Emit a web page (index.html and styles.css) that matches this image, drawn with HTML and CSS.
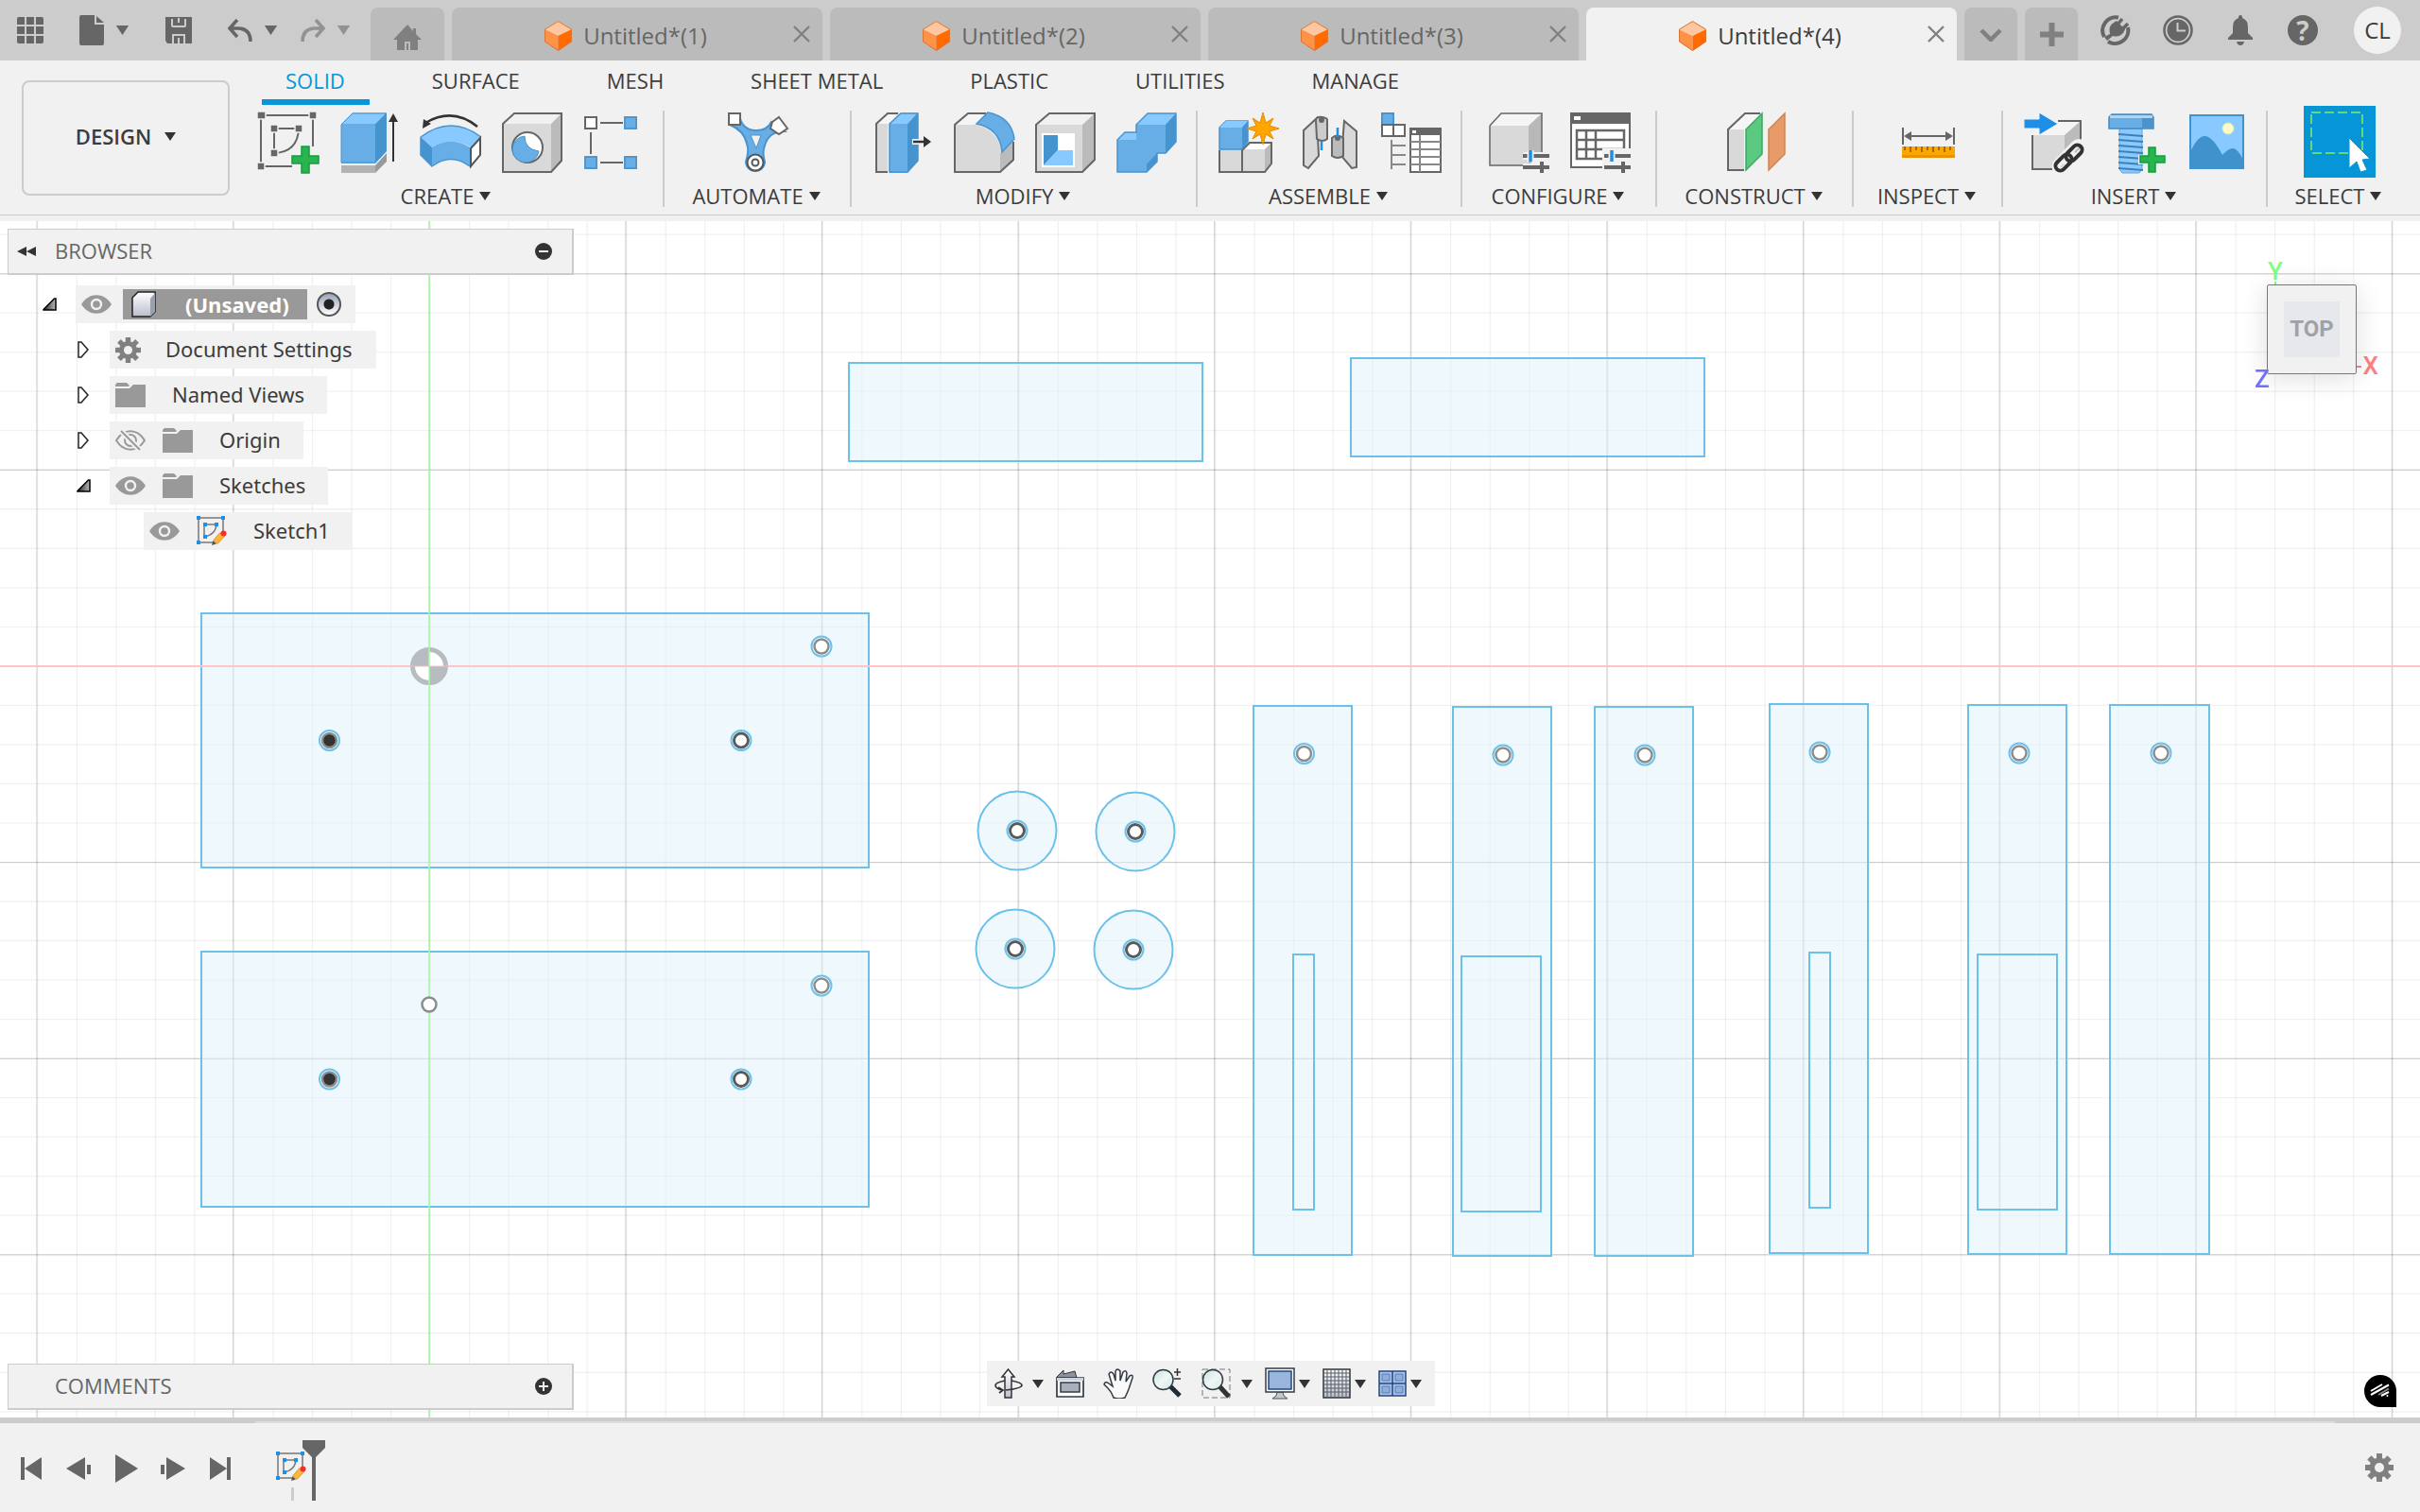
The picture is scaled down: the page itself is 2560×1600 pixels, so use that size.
FILE: index.html
```html
<!DOCTYPE html>
<html lang="en">
<head>
<meta charset="utf-8">
<meta name="viewport" content="width=device-width, initial-scale=1">
<title>Untitled*(4)</title>
<link rel="stylesheet" href="styles.css">
</head>
<body>
<svg class="sprite" aria-hidden="true">
  <symbol id="caret" viewBox="0 0 12 9"><path d="M0 0H12L6 9Z" fill="currentColor"/></symbol>
  <symbol id="cube" viewBox="0 0 29 32"><path d="M0 9L14.500 0L29 9L14.500 16Z" fill="#ffc7a0"/><path d="M0 9L14.500 16V32L0 22Z" fill="#ff9248"/><path d="M29 9L14.500 16V32L29 22Z" fill="#ff6b00"/><path d="M.5 9L14.500 .6L28.500 9V22L14.500 31.400L.5 22Z" fill="none" stroke="#d9762f" stroke-width="1"/></symbol>
  <symbol id="close" viewBox="0 0 20 18"><path d="M2 1L18 17M18 1L2 17" stroke="currentColor" stroke-width="2.400"/></symbol>
  <symbol id="eye" viewBox="0 0 32 20"><path d="M0 10C8-3 24-3 32 10C24 23 8 23 0 10Z" fill="#999"/><circle cx="16" cy="10" r="5" fill="none" stroke="#f1f1f1" stroke-width="2.400"/></symbol>
  <symbol id="eye-off" viewBox="0 0 32 22"><path d="M1 11C9-2 23-2 31 11C23 24 9 24 1 11Z" fill="none" stroke="#999" stroke-width="2"/><circle cx="16" cy="11" r="6" fill="none" stroke="#999" stroke-width="2"/><circle cx="16" cy="11" r="2" fill="#999"/><path d="M5 0L27 22" stroke="#f1f1f1" stroke-width="6"/><path d="M6 1L26 21" stroke="#999" stroke-width="2"/></symbol>
  <symbol id="folder" viewBox="0 0 32 26"><path d="M0 1.500H1L1.500 0H12L15 3L14 4H0Z" fill="#999"/><path d="M0 6H15L19 2H32V26H0Z" fill="#999"/></symbol>
  <symbol id="gear" viewBox="0 0 30 30"><g fill="#808080"><rect x="12" width="6" height="30"/><rect y="12" width="30" height="6"/><rect x="12" width="6" height="30" transform="rotate(45 15 15)"/><rect y="12" width="30" height="6" transform="rotate(45 15 15)"/><circle cx="15" cy="15" r="10.500"/></g><circle cx="15" cy="15" r="5" fill="#f1f1f1"/></symbol>
  <symbol id="closed" viewBox="0 0 12 18"><path d="M1 1H4L11 9L4 17H1Z" fill="#fff" stroke="#222" stroke-width="1.500"/></symbol>
  <symbol id="open" viewBox="0 0 15 14"><path d="M1 12.500L12.500 1H14V13H1Z" fill="url(#openfill)" stroke="#000" stroke-width="1.500"/></symbol>
  <linearGradient id="openfill"><stop stop-color="#222"/><stop offset="1" stop-color="#bbb"/></linearGradient>
  <linearGradient id="steel" x1="0" y1="0" x2="0" y2="1"><stop stop-color="#fff"/><stop offset="1" stop-color="#b9bfcb"/></linearGradient>
  <linearGradient id="lens" x1="0" y1="0" x2="1" y2="1"><stop stop-color="#c9dedd"/><stop offset=".5" stop-color="#eef7f5"/><stop offset="1" stop-color="#d3e6e4"/></linearGradient>
  <symbol id="sketch" viewBox="0 0 32 32"><path d="M2 2H28V20M2 2V28H18M8 9H21Q20 20 8 22Z" fill="none" stroke="#777" stroke-width="1.500"/><g fill="#1e8fe6"><rect width="4" height="4"/><rect x="26" width="4" height="4"/><rect y="26" width="4" height="4"/><rect x="7" y="7" width="4" height="4"/><rect x="19" y="7" width="4" height="4"/><rect x="7" y="20" width="4" height="4"/></g><path d="M16 31L17.500 26L21 29.500Z" fill="#555"/><path d="M18 25.500L25 17.500L29.500 21.500L22 29.500Z" fill="#fbb83c" stroke="#d8932a" stroke-width="1"/><circle cx="28.500" cy="18.500" r="3" fill="#f03030"/></symbol>
  <symbol id="sliders" viewBox="0 0 28 24"><path d="M0 6H28M0 18H28" stroke="#f1f1f1" stroke-width="8"/><path d="M0 6H28M0 18H28" stroke="#666" stroke-width="4"/><path d="M8 0V12" stroke="#f1f1f1" stroke-width="7"/><path d="M8 0V12" stroke="#1e8fe6" stroke-width="3.500"/><path d="M20 12V24" stroke="#666" stroke-width="4"/></symbol>
</svg>

<header class="appbar">
  <div class="quick">
    <button class="icon-btn" aria-label="Data panel"><svg width="28" height="28" viewBox="0 0 28 28" fill="#666"><path d="M2 0H8V8H0V2Q0 0 2 0ZM10 0H18V8H10ZM20 0H26Q28 0 28 2V8H20ZM0 10H8V18H0ZM10 10H18V18H10ZM20 10H28V18H20ZM0 20H8V28H2Q0 28 0 26ZM10 20H18V28H10ZM20 20H28V26Q28 28 26 28H20Z"/></svg></button>
    <button class="icon-btn drop" aria-label="File"><svg width="26" height="32" viewBox="0 0 26 32" fill="#666"><path d="M2 0H16V10H26V30Q26 32 24 32H2Q0 32 0 30V2Q0 0 2 0Z"/><path d="M18 1L26 8H18Z"/></svg><svg class="c15"><use href="#caret"/></svg></button>
    <button class="icon-btn" aria-label="Save"><svg width="28" height="28" viewBox="0 0 28 28"><path d="M0 0H28V28H2L0 25Z" fill="#666"/><path d="M7 2V9Q7 10 8 10H20Q21 10 21 9V2M14 1V6M8 28V19H20V28M14 22V28" fill="none" stroke="#ccc" stroke-width="2"/></svg></button>
    <button class="icon-btn drop" aria-label="Undo"><svg width="26" height="25" viewBox="0 0 26 25"><path d="M10 1L2 10L10 19M2 10H12Q24 11 24 24" fill="none" stroke="#666" stroke-width="3.500"/></svg><svg class="c15"><use href="#caret"/></svg></button>
    <button class="icon-btn drop faint" aria-label="Redo"><svg width="26" height="25" viewBox="0 0 26 25"><path d="M16 1L24 10L16 19M24 10H14Q2 11 2 24" fill="none" stroke="#929292" stroke-width="3.500"/></svg><svg class="c15"><use href="#caret"/></svg></button>
  </div>
  <nav class="tabs" aria-label="Documents">
    <button class="tab home" aria-label="Home"><svg width="30" height="27" viewBox="0 0 30 27"><path d="M15 0L21 7V4H24V10L30 16H26V27H18V18H12V27H4V16H0Z" fill="#808080"/><path d="M14 20H16V27H14Z" fill="#808080"/></svg></button>
    <div class="tab"><a class="title" href="#1"><svg width="29" height="32"><use href="#cube"/></svg>Untitled*(1)</a><button class="x" aria-label="Close"><svg width="20" height="18"><use href="#close"/></svg></button></div>
    <div class="tab"><a class="title" href="#2"><svg width="29" height="32"><use href="#cube"/></svg>Untitled*(2)</a><button class="x" aria-label="Close"><svg width="20" height="18"><use href="#close"/></svg></button></div>
    <div class="tab"><a class="title" href="#3"><svg width="29" height="32"><use href="#cube"/></svg>Untitled*(3)</a><button class="x" aria-label="Close"><svg width="20" height="18"><use href="#close"/></svg></button></div>
    <div class="tab active"><a class="title" href="#4"><svg width="29" height="32"><use href="#cube"/></svg>Untitled*(4)</a><button class="x" aria-label="Close"><svg width="20" height="18"><use href="#close"/></svg></button></div>
    <button class="tab small" aria-label="All tabs"><svg width="24" height="16" viewBox="0 0 24 16"><path d="M2 4L12 14L22 4" fill="none" stroke="#808080" stroke-width="4.500"/></svg></button>
    <button class="tab small" aria-label="New tab"><svg width="25" height="25" viewBox="0 0 25 25"><path d="M12.500 0V25M0 12.500H25" stroke="#808080" stroke-width="6"/></svg></button>
  </nav>
  <div class="account">
    <button class="icon-btn" aria-label="Extensions"><svg width="32" height="32" viewBox="0 0 32 32"><path d="M19 2.500A14 14 0 0 0 4 23M29 13A14 14 0 0 1 8 28" fill="none" stroke="#666" stroke-width="4"/><path d="M10 20Q8 11 14 8L17 6L26 15L24 19Q19 24 13 22L7 27L4 23Z" fill="#666"/><path d="M18 10L23 4M23 15L29 9" stroke="#666" stroke-width="3.500"/></svg></button>
    <button class="icon-btn" aria-label="Jobs"><svg width="32" height="32" viewBox="0 0 32 32"><circle cx="16" cy="16" r="14.500" fill="none" stroke="#666" stroke-width="2.500"/><circle cx="16" cy="16" r="11.500" fill="#666"/><path d="M15.500 8V16.500H24" fill="none" stroke="#ccc" stroke-width="2"/></svg></button>
    <button class="icon-btn" aria-label="Notifications"><svg width="32" height="32" viewBox="0 0 32 32" fill="#666"><path d="M14 2Q14 0 16 0T18 2V3Q24 5 24 13V19L29 24V26H3V24L8 19V13Q8 5 14 3ZM12 28H20Q19 32 16 32T12 28Z"/></svg></button>
    <button class="icon-btn help" aria-label="Help">?</button>
    <button class="avatar">CL</button>
  </div>
</header>

<section class="ribbon">
  <button class="workspace">DESIGN <svg class="c12"><use href="#caret"/></svg></button>
  <div class="ribbon-main">
    <nav class="rtabs" aria-label="Toolbar">
      <button class="on">SOLID</button><button>SURFACE</button><button>MESH</button><button>SHEET METAL</button><button>PLASTIC</button><button>UTILITIES</button><button>MANAGE</button>
    </nav>
    <div class="groups">
      <div class="group create">
        <div class="tools">
          <button aria-label="Create Sketch"><svg viewBox="0 0 64 64"><path d="M3 3H58V36M3 3V57H36M17 17H43Q42 42 17 43Z" fill="none" stroke="#666" stroke-width="2"/><g fill="#666" stroke="#f1f1f1" stroke-width="1.500"><path d="M-1-1H8V7H-1ZM54-1H62V7H54ZM-1 53H7V61H-1ZM13 13H21V21H13ZM39 13H47V21H39ZM13 39H21V47H13Z"/></g><path d="M46 34H54V46H66V54H54V66H46V54H34V46H46Z" fill="#f1f1f1"/><path d="M46 36H54V46H64V54H54V64H46V54H36V46H46Z" fill="#28b44f" stroke="#179a42" stroke-width="1.500"/></svg></button>
          <button aria-label="Extrude"><svg viewBox="0 0 64 64"><path d="M2 12L14 0H50L38 12Z" fill="#88caff"/><path d="M2 12H38V54H2Z" fill="#68aee6"/><path d="M38 12L50 0V41L38 54Z" fill="#4694cf"/><path d="M2 13L14 1H49V41L38 53H2Z" fill="none" stroke="#4a93cc"/><path d="M2 56H38V64H2Z" fill="#b3b3b3"/><path d="M38 56L50 43V52L38 64Z" fill="#999"/><path d="M57 6V52" stroke="#333" stroke-width="2"/><path d="M52 10L57 1L62 10Z" fill="#333"/></svg></button>
          <button aria-label="Revolve"><svg viewBox="0 0 64 64"><path d="M60 15Q34-6 5 11" fill="none" stroke="#333" stroke-width="2.500"/><path d="M2 17L3 7L11 12Z" fill="#333"/><path d="M0 26Q32 2 64 26L53 37Q32 24 12 37Z" fill="#88caff"/><path d="M12 37Q32 24 52 37V57Q32 42 12 57Z" fill="#68aee6"/><path d="M0 26L12 37V57L0 45Z" fill="#4694cf"/><path d="M0 26Q32 2 64 26M0 26V45L12 57Q32 42 52 57" fill="none" stroke="#4a93cc" stroke-width="1.500"/><path d="M53 38L63 27V45L53 57Z" fill="#fff" stroke="#555" stroke-width="2"/></svg></button>
          <button aria-label="Hole"><svg viewBox="0 0 64 64"><path d="M1 12L13 1H63V51L52 63H1Z" fill="#f1f1f1"/><path d="M1 12H52V63H1Z" fill="#d9d9d9"/><path d="M52 12L63 1V51L52 63Z" fill="#bbb"/><path d="M1 12L13 1H63V51L52 63H1Z" fill="none" stroke="#666" stroke-width="2"/><circle cx="27" cy="37" r="16" fill="#fff" stroke="#666" stroke-width="2"/><path d="M24 25A14 14 0 1 0 39 41Q24 39 24 25Z" fill="#68aee6" stroke="#4a93cc"/></svg></button>
          <button aria-label="Rectangular Pattern"><svg viewBox="0 0 64 64"><path d="M18 11H42M8 21V44M18 53H42" stroke="#666" stroke-width="2"/><path d="M2 5H14V17H2Z" fill="#fff" stroke="#666" stroke-width="2"/><path d="M44 5H56V17H44ZM2 47H14V59H2ZM44 47H56V59H44Z" fill="#68aee6" stroke="#5296cc" stroke-width="2"/></svg></button>
        </div>
        <button class="label">CREATE <svg class="c12"><use href="#caret"/></svg></button>
      </div>
      <div class="group automate">
        <div class="tools">
          <button aria-label="Automated Modeling"><svg viewBox="0 0 64 64"><path d="M2 13L12 3Q15 18 28 19Q41 20 46 10L60 20Q43 20 39 35Q36 42 39 52A10 10 0 1 1 19 52Q23 40 20 33Q17 19 2 13Z" fill="#68aee6" stroke="#4a93cc" stroke-width="2"/><path d="M24 24H35L30 38Z" fill="#f1f1f1" stroke="#4a93cc"/><path d="M1 1H13V13H1Z" fill="#fff" stroke="#666" stroke-width="2"/><path d="M54 5L63 17L54 23L45 17L47 10Z" fill="#fff" stroke="#666" stroke-width="2"/><circle cx="29" cy="53" r="8.500" fill="#fff" stroke="#555" stroke-width="2"/><circle cx="29" cy="53" r="3.500" fill="#fff" stroke="#555" stroke-width="2"/></svg></button>
        </div>
        <button class="label">AUTOMATE <svg class="c12"><use href="#caret"/></svg></button>
      </div>
      <div class="group modify">
        <div class="tools">
          <button aria-label="Press Pull"><svg viewBox="0 0 64 64"><path d="M4 12L16 1H28L16 12V63H4Z" fill="#d9d9d9"/><path d="M4 12L16 1H27L17 12Z" fill="#f5f5f5"/><path d="M27 1H16L4 12V63H16" fill="none" stroke="#666" stroke-width="2"/><path d="M18 12L30 0H48L37 12Z" fill="#88caff"/><path d="M18 12H37V64H18Z" fill="#68aee6"/><path d="M37 12L48 0V51L37 64Z" fill="#4694cf"/><path d="M18 12L30 1H48V51L37 63H18Z" fill="none" stroke="#4a93cc" stroke-width="1.500"/><path d="M42 31H54" stroke="#f1f1f1" stroke-width="6"/><path d="M43 31H55" stroke="#333" stroke-width="2.500"/><path d="M54 25L62 31L54 37Z" fill="#333"/></svg></button>
          <button aria-label="Fillet"><svg viewBox="0 0 64 64"><path d="M1 13L15 1H34L24 13Q48 20 50 42L63 32V52L49 63H1Z" fill="#d9d9d9"/><path d="M1 13L15 1H34L24 13Z" fill="#f5f5f5"/><path d="M49 44L63 30V51L49 63Z" fill="#bbb"/><path d="M34 1H15L1 13V63H49L63 50V31" fill="none" stroke="#666" stroke-width="2"/><path d="M24 12L36 0Q61 5 64 28L51 42Q49 17 24 12Z" fill="#68aee6" stroke="#4a93cc" stroke-width="1.500"/></svg></button>
          <button aria-label="Shell"><svg viewBox="0 0 64 64"><path d="M1 13L15 1H63V50L50 63H1Z" fill="#f1f1f1"/><path d="M1 13H50V63H1Z" fill="#d9d9d9"/><path d="M50 13L63 1V50L50 63Z" fill="#bbb"/><path d="M1 13L15 1H63V50L50 63H1Z" fill="none" stroke="#666" stroke-width="2"/><path d="M7 22H42V58H7Z" fill="#fff"/><path d="M9 24H24V40L9 56Z" fill="#4694cf"/><path d="M24 40H40V56H9Z" fill="#88caff"/></svg></button>
          <button aria-label="Combine"><svg viewBox="0 0 64 64"><path d="M1 29L9 21H21V13L33 1H63V31L52 43H43V52L32 63H1Z" fill="#68aee6"/><path d="M1 29L9 21H21V29ZM21 13L33 1H63L52 13Z" fill="#88caff"/><path d="M52 13L63 1V31L52 43ZM32 63V55L43 43V52Z" fill="#4694cf"/><path d="M1 29L9 21H21V13L33 1H63V31L52 43H43V52L32 63H1Z" fill="none" stroke="#4a93cc" stroke-width="1.500"/></svg></button>
        </div>
        <button class="label">MODIFY <svg class="c12"><use href="#caret"/></svg></button>
      </div>
      <div class="group assemble">
        <div class="tools">
          <button aria-label="New Component"><svg viewBox="0 0 64 64"><path d="M1 39H26L32 32H56V53L49 63H1Z" fill="#d9d9d9"/><path d="M26 39L33 32H56L49 39Z" fill="#fff"/><path d="M49 39L56 32V54L49 63Z" fill="#bbb"/><path d="M1 40V63H49L56 54V32H33L25 40V62" fill="none" stroke="#666" stroke-width="2"/><path d="M1 16L8 9H31V31L24 39H1Z" fill="#68aee6" stroke="#4a93cc" stroke-width="1.500"/><path d="M1 16L8 9H31L25 16Z" fill="#88caff"/><path d="M25 16L31 9V31L25 39Z" fill="#4694cf"/><path d="M47 0L50 11L58 6L54 14L64 17L54 20L58 28L50 23L47 34L44 23L36 28L40 20L30 17L40 14L36 6L44 11Z" fill="#ffa500" stroke="#e08d00"/></svg></button>
          <button aria-label="Joint"><svg viewBox="0 0 64 64"><path d="M4 19L18 6L20 46L9 59L4 56Z" fill="#d9d9d9" stroke="#666" stroke-width="2"/><path d="M47 9L60 20V58L55 59L44 46Z" fill="#d9d9d9" stroke="#666" stroke-width="2"/><path d="M17 8Q18 4 24 5T29 9V28Q24 32 18 28Z" fill="#ccc" stroke="#666" stroke-width="2"/><circle cx="23" cy="8" r="3" fill="#666"/><path d="M34 27Q39 22 46 27V46Q40 50 34 46Z" fill="#bbb" stroke="#666" stroke-width="2"/><circle cx="40" cy="27" r="3" fill="#666"/><path d="M23 30V40M40 16V26" stroke="#1e8fe6" stroke-width="2.500"/></svg></button>
          <button aria-label="Bill of Materials"><svg viewBox="0 0 64 64"><path d="M1 1H13V13H1Z" fill="#68aee6" stroke="#4a93cc" stroke-width="2"/><path d="M1 13H13V25H1ZM13 13H25V25H13Z" fill="#fff" stroke="#666" stroke-width="2"/><path d="M11 29V60M11 35H26M11 45H26M11 55H26" stroke="#888" stroke-width="2"/><path d="M31 17H63V63H31Z" fill="#fff" stroke="#666" stroke-width="2"/><path d="M30 16H64V24H30Z" fill="#666"/><path d="M31 31H63M31 39H63M31 47H63M31 55H63M41 24V63" stroke="#888" stroke-width="2"/><path d="M33 19H37V22H33Z" fill="#fff"/></svg></button>
        </div>
        <button class="label">ASSEMBLE <svg class="c12"><use href="#caret"/></svg></button>
      </div>
      <div class="group configure">
        <div class="tools">
          <button aria-label="Configure"><svg viewBox="0 0 64 64"><path d="M1 13L13 1H56V43L44 56H1Z" fill="#f5f5f5"/><path d="M1 14H42V56H1Z" fill="#d9d9d9"/><path d="M42 14L56 1V42L42 56Z" fill="#b8b8b8"/><path d="M1 14L13 1H56V43M1 14V56H40" fill="none" stroke="#666" stroke-width="1.500"/><use href="#sliders" x="36" y="40" width="28" height="24"/></svg></button>
          <button aria-label="Configuration Table"><svg viewBox="0 0 64 64"><path d="M1 1H63V58H1Z" fill="#fff" stroke="#666" stroke-width="2"/><path d="M0 0H64V12H0Z" fill="#666"/><path d="M4 4H11V8H4Z" fill="#fff"/><path d="M7 19H57V49H7ZM7 29H57M7 39H57M17 19V49M27 19V49" fill="none" stroke="#666" stroke-width="2.500"/><path d="M34 38H66V66H34Z" fill="#f1f1f1"/><use href="#sliders" x="36" y="40" width="28" height="24"/></svg></button>
        </div>
        <button class="label">CONFIGURE <svg class="c12"><use href="#caret"/></svg></button>
      </div>
      <div class="group construct">
        <div class="tools">
          <button aria-label="Offset Plane"><svg viewBox="0 0 64 64"><path d="M3 18L21 1H37V46L20 61H3Z" fill="#f5f5f5"/><path d="M3 18H20V61H3Z" fill="#d9d9d9"/><path d="M37 1H21L3 18V61H20" fill="none" stroke="#666" stroke-width="2"/><path d="M22 18L39 1V44L22 61Z" fill="#5bc980" stroke="#3da763" stroke-width="1.500"/><path d="M46 18L63 1V44L46 61Z" fill="#e79b68" stroke="#cf8450" stroke-width="1.500"/></svg></button>
        </div>
        <button class="label">CONSTRUCT <svg class="c12"><use href="#caret"/></svg></button>
      </div>
      <div class="group inspect">
        <div class="tools">
          <button aria-label="Measure"><svg viewBox="0 0 64 64"><path d="M5 16V34M59 16V34M8 25H56" stroke="#666" stroke-width="2"/><path d="M6 25L14 20V30ZM58 25L50 20V30Z" fill="#666"/><path d="M4 36H60V48H4Z" fill="#ffa500"/><path d="M4 45H60V48H4Z" fill="#e69500"/><path d="M7 36V40M13 36V42M19 36V40M25 36V42M31 36V40M37 36V42M43 36V40M49 36V42M55 36V40" stroke="#8a5a00" stroke-width="1.500"/></svg></button>
        </div>
        <button class="label">INSPECT <svg class="c12"><use href="#caret"/></svg></button>
      </div>
      <div class="group insert">
        <div class="tools">
          <button aria-label="Insert Derive"><svg viewBox="0 0 64 64"><path d="M9 24L25 9H60V44L43 60H9Z" fill="#f5f5f5"/><path d="M9 24H43V60H9Z" fill="#d9d9d9"/><path d="M43 24L60 9V44L43 60Z" fill="#bbb"/><path d="M36 9H60V38M9 24V60H32" fill="none" stroke="#666" stroke-width="2"/><path d="M0 7H16V0L36 12L16 24V17H0Z" fill="#1e8fe6" stroke="#f1f1f1"/><g fill="none" stroke="#f1f1f1" stroke-width="9"><rect x="42" y="37" width="24" height="11" rx="5.500" transform="rotate(-45 54 43)"/><rect x="32" y="48" width="22" height="11" rx="5.500" transform="rotate(-45 43 53)"/></g><g fill="none" stroke="#333" stroke-width="4"><rect x="43" y="38" width="20" height="10" rx="5" transform="rotate(-45 53 43)"/><rect x="32" y="48" width="20" height="10" rx="5" transform="rotate(-45 42 53)"/></g></svg></button>
          <button aria-label="Insert Fastener"><svg viewBox="0 0 64 64"><path d="M15 17H39V60L36 64H18L15 60Z" fill="#88caff" stroke="#5ea4dc"/><path d="M4 5L7 2H49L51 5V17H4Z" fill="#68aee6" stroke="#4a88bb" stroke-width="1.500"/><path d="M39 4H51V17H39Z" fill="#4a93cc"/><path d="M5 3H50V6H5Z" fill="#a9d6f7"/><path d="M14 23L40 25M14 29L40 31M14 35L40 37M14 41L40 43M14 47L40 49M14 53L40 55M14 59L40 61" stroke="#3f7fb3" stroke-width="2"/><path d="M45 35H55V45H65V55H55V65H45V55H35V45H45Z" fill="#f1f1f1"/><path d="M46 37H53V46H63V53H53V63H46V53H37V46H46Z" fill="#28b44f" stroke="#179a42" stroke-width="1.500"/></svg></button>
          <button aria-label="Insert Canvas"><svg viewBox="0 0 64 64"><path d="M4 3H60V59H4Z" fill="#88caff"/><path d="M4 42Q12 24 20 25T38 45Q44 38 49 38T60 50V59H4Z" fill="#3f92cc"/><path d="M4 3H60V59H4Z" fill="none" stroke="#3f92cc" stroke-width="2"/><circle cx="44" cy="17" r="6" fill="#fffbc8" stroke="#d8e6b0"/></svg></button>
        </div>
        <button class="label">INSERT <svg class="c12"><use href="#caret"/></svg></button>
      </div>
      <div class="group select">
        <div class="tools">
          <button class="picked" aria-label="Select"><svg viewBox="0 0 76 76"><path d="M8 7H62V50H8Z" fill="none" stroke="#66d878" stroke-width="2" stroke-dasharray="10 4"/><path d="M48 34L70 56L62 57L67 68L60 70L56 59L48 66Z" fill="#fff" stroke="#0696d7"/></svg></button>
        </div>
        <button class="label">SELECT <svg class="c12"><use href="#caret"/></svg></button>
      </div>
    </div>
  </div>
</section>

<main class="canvas">
  <svg class="scene" aria-label="Sketch1">
    <g transform="translate(0 -234)" fill="none">
      <g stroke="#000" stroke-opacity=".055" stroke-width="3000">
        <path d="M-3 1500H4000" stroke-dasharray="1.300 40.224" stroke-dashoffset="-.65"/>
        <path d="M1500 205.900V2000" stroke-dasharray="1.300 40.224"/>
      </g>
      <g stroke="#000" stroke-opacity=".15" stroke-width="3000">
        <path d="M38.300 1500H4000" stroke-dasharray="1.300 206.320"/>
        <path d="M1500 289.200V2000" stroke-dasharray="1.300 206.320"/>
      </g>
      <g stroke="#6cc1e9" stroke-width="2" fill="#dff1fc" fill-opacity=".5">
        <rect x="213" y="649" width="706" height="269"/>
        <rect x="213" y="1007" width="706" height="270"/>
        <rect x="898" y="384" width="374" height="104"/>
        <rect x="1429" y="379" width="374" height="104"/>
        <rect x="1326" y="747" width="104" height="581"/>
        <rect x="1537" y="748" width="104" height="581"/>
        <rect x="1687" y="748" width="104" height="581"/>
        <rect x="1872" y="745" width="104" height="581"/>
        <rect x="2082" y="746" width="104" height="581"/>
        <rect x="2232" y="746" width="105" height="581"/>
        <circle cx="1076" cy="879" r="41.500"/><circle cx="1201" cy="880" r="41.500"/><circle cx="1074" cy="1004" r="41.500"/><circle cx="1199" cy="1005" r="41.500"/>
      </g>
      <g stroke="#6cc1e9" stroke-width="2">
        <rect x="1368" y="1010" width="22" height="270"/>
        <rect x="1546" y="1012" width="84" height="270"/>
        <rect x="1914" y="1008" width="22" height="270"/>
        <rect x="2092" y="1010" width="84" height="270"/>
      </g>
      <path d="M0 705H4000" stroke="#ffc4c8" stroke-width="2"/>
      <path d="M454 200V2000" stroke="#a4fba4" stroke-width="1.500"/>
      <g><circle cx="454" cy="705" r="17.500" stroke="#b6bcbf" stroke-width="5" fill="#fff"/><path d="M454 705V687A18 18 0 0 0 436 705ZM454 705V723A18 18 0 0 0 472 705Z" fill="#b6bcbf"/><path d="M454 685V725" stroke="#a4fba4" stroke-width="1.500"/><path d="M434 705H474" stroke="#ecc4c6" stroke-width="1"/></g>
      <g stroke="#6cc1e9" stroke-width="2" fill="#fff">
        <circle cx="869" cy="684" r="10.500"/><circle cx="348.500" cy="783.500" r="10.500"/><circle cx="784" cy="783.500" r="10.500"/>
        <circle cx="869" cy="1043" r="10.500"/><circle cx="348.500" cy="1142" r="10.500"/><circle cx="784" cy="1142" r="10.500"/>
        <circle cx="1076" cy="879" r="10.500"/><circle cx="1201" cy="880" r="10.500"/><circle cx="1074" cy="1004" r="10.500"/><circle cx="1199" cy="1005" r="10.500"/>
        <circle cx="1379.500" cy="797.500" r="10.500"/><circle cx="1590" cy="799" r="10.500"/><circle cx="1740" cy="799" r="10.500"/><circle cx="1925" cy="796" r="10.500"/><circle cx="2136" cy="797" r="10.500"/><circle cx="2286" cy="797" r="10.500"/>
      </g>
      <g stroke="#8c8c8c" stroke-width="2.500">
        <circle cx="869" cy="684" r="7.500"/><circle cx="869" cy="1043" r="7.500"/><circle cx="454" cy="1063" r="7.500" fill="#fff"/>
        <circle cx="1379.500" cy="797.500" r="7.500"/><circle cx="1590" cy="799" r="7.500"/><circle cx="1740" cy="799" r="7.500"/><circle cx="1925" cy="796" r="7.500"/><circle cx="2136" cy="797" r="7.500"/><circle cx="2286" cy="797" r="7.500"/>
      </g>
      <g stroke="#5a5a5a" stroke-width="3">
        <circle cx="784" cy="783.500" r="7.500"/><circle cx="784" cy="1142" r="7.500"/>
        <circle cx="1076" cy="879" r="7.500"/><circle cx="1201" cy="880" r="7.500"/><circle cx="1074" cy="1004" r="7.500"/><circle cx="1199" cy="1005" r="7.500"/>
      </g>
      <g stroke="#8c8c8c" stroke-width="2.500" fill="#333"><circle cx="348.500" cy="783.500" r="7.500"/><circle cx="348.500" cy="1142" r="7.500"/></g>
    </g>
  </svg>

  <aside class="browser">
    <h2 class="panel"><button class="icon-btn fold" aria-label="Collapse browser"><svg width="20" height="10" viewBox="0 0 20 10"><path d="M0 5L10 0V10ZM10 5L20 0V10Z" fill="#333"/></svg></button><span>BROWSER</span><button class="icon-btn" aria-label="Hide"><svg width="18" height="18" viewBox="0 0 18 18"><circle cx="9" cy="9" r="9" fill="#333"/><path d="M4 9H14" stroke="#f1f1f1" stroke-width="2"/></svg></button></h2>
    <ul class="tree">
      <li><button class="icon-btn twist" aria-label="Collapse"><svg width="15" height="14"><use href="#open"/></svg></button><div class="node root"><svg width="32" height="20"><use href="#eye"/></svg><span class="chip"><svg width="26" height="28" viewBox="0 0 26 28"><path d="M1 7L7 1H25V22L20 27H1Z" fill="url(#steel)" stroke="#222" stroke-width="1.500"/><path d="M20 8L25 2V22L20 27Z" fill="#9aa1ae"/></svg>(Unsaved)</span><input type="radio" checked aria-label="Activate component"></div></li>
      <li class="d1"><button class="icon-btn twist" aria-label="Expand"><svg width="12" height="18"><use href="#closed"/></svg></button><div class="node"><svg width="27" height="27"><use href="#gear" width="27" height="27"/></svg><span class="wide">Document Settings</span></div></li>
      <li class="d1"><button class="icon-btn twist" aria-label="Expand"><svg width="12" height="18"><use href="#closed"/></svg></button><div class="node"><svg width="32" height="26"><use href="#folder"/></svg><span>Named Views</span></div></li>
      <li class="d1"><button class="icon-btn twist" aria-label="Expand"><svg width="12" height="18"><use href="#closed"/></svg></button><div class="node"><svg width="32" height="22"><use href="#eye-off"/></svg><svg width="32" height="26"><use href="#folder"/></svg><span>Origin</span></div></li>
      <li class="d1"><button class="icon-btn twist" aria-label="Collapse"><svg width="15" height="14"><use href="#open"/></svg></button><div class="node"><svg width="32" height="20"><use href="#eye"/></svg><svg width="32" height="26"><use href="#folder"/></svg><span>Sketches</span></div></li>
      <li class="d2"><div class="node"><svg width="32" height="20"><use href="#eye"/></svg><svg width="32" height="32"><use href="#sketch"/></svg><span>Sketch1</span></div></li>
    </ul>
  </aside>

  <div class="viewcube"><b class="ax y">Y</b><b class="ax x-axis">X</b><button class="face"><span>TOP</span></button><b class="ax z">Z</b></div>

  <section class="comments"><h2 class="panel"><span>COMMENTS</span><button class="icon-btn" aria-label="Add comment"><svg width="18" height="18" viewBox="0 0 18 18"><circle cx="9" cy="9" r="9" fill="#333"/><path d="M4 9H14M9 4V14" stroke="#f1f1f1" stroke-width="2"/></svg></button></h2></section>

  <div class="navbar">
    <button class="icon-btn pair" aria-label="Orbit"><svg width="30" height="32" viewBox="0 0 30 32"><path d="M11 31V9H8L14.500 1L21 9H18V31Z" fill="url(#steel)" stroke="#333" stroke-width="1.500"/><path d="M11 13Q1 15 1 18T8 23M4 20L9 23L5 26M18 13Q29 15 29 18T12 23" fill="none" stroke="#333" stroke-width="1.700"/></svg><svg class="c12"><use href="#caret"/></svg></button>
    <button class="icon-btn" aria-label="Look At"><svg width="30" height="30" viewBox="0 0 30 30"><path d="M1 8L8 1V5L20 2L22 9H1Z" fill="#8b929c" stroke="#333"/><path d="M1 9H29V29H1Z" fill="#fff" stroke="#333b45" stroke-width="1.700"/><path d="M1 9H29V12H1Z" fill="#ccd3dc"/><path d="M5 14H25V24H5Z" fill="#a9b0bb" stroke="#333b45" stroke-width="1.500"/></svg></button>
    <button class="icon-btn" aria-label="Pan"><svg width="32" height="32" viewBox="0 0 32 32"><path d="M11 31Q9 25 5 21L1 17Q2 13 6 16L10 19L6 6Q8 2 11 6L13 13V3Q15-1 18 3V13L21 4Q24 1 25 5L24 14L28 8Q32 6 31 10L27 22Q25 27 23 31Q17 33 11 31Z" fill="#fafafa" stroke="#333b45" stroke-width="1.500"/></svg></button>
    <button class="icon-btn" aria-label="Zoom"><svg width="32" height="32" viewBox="0 0 32 32"><path d="M19 19L29 29" stroke="#222b38" stroke-width="5"/><circle cx="11.500" cy="12" r="10.500" fill="url(#lens)" stroke="#333b45" stroke-width="1.500"/><path d="M23 4H30M26.500 0V8M23 11H30" stroke="#333" stroke-width="1.500"/></svg></button>
    <button class="icon-btn pair" aria-label="Fit"><svg width="32" height="32" viewBox="0 0 32 32"><path d="M1 1H30V31H1Z" fill="none" stroke="#777" stroke-dasharray="6 3"/><path d="M19 19L29 30" stroke="#333" stroke-width="5"/><circle cx="12" cy="12" r="10.500" fill="url(#lens)" stroke="#333b45" stroke-width="1.500"/></svg><svg class="c12"><use href="#caret"/></svg></button>
    <button class="icon-btn pair tight" aria-label="Display Settings"><svg width="32" height="34" viewBox="0 0 32 34"><path d="M13 26H19L20 30L24 33H8L12 30Z" fill="#c3c8d0" stroke="#555"/><path d="M1 1H31V26H1Z" fill="#fff" stroke="#333b45" stroke-width="1.500"/><path d="M4 4H28V23H4Z" fill="#98b5dd" stroke="#27457c" stroke-width="1.500"/></svg><svg class="c12"><use href="#caret"/></svg></button>
    <button class="icon-btn pair tight" aria-label="Grid and Snaps"><svg width="30" height="32" viewBox="0 0 30 32"><path d="M1 1H29V31H1Z" fill="url(#steel)" stroke="#333" stroke-width="1.500"/><path d="M5 1V31M9 1V31M13 1V31M17 1V31M21 1V31M25 1V31M1 5H29M1 9H29M1 13H29M1 17H29M1 21H29M1 25H29" stroke="#555b66"/></svg><svg class="c12"><use href="#caret"/></svg></button>
    <button class="icon-btn pair tight" aria-label="Viewports"><svg width="30" height="28" viewBox="0 0 30 28"><path d="M1 1H29V27H1Z" fill="#a9c4e8" stroke="#27457c" stroke-width="1.500"/><path d="M15 1V27M1 14H29" stroke="#27457c" stroke-width="1.500"/><path d="M4 4H12V11H4ZM18 4H26V11H18ZM4 17H12V24H4ZM18 17H26V24H18Z" fill="#8eafdc" stroke="#5b7fb8"/></svg><svg class="c12"><use href="#caret"/></svg></button>
  </div>
  <button class="icon-btn assist" aria-label="Assistant"><svg width="34" height="34" viewBox="0 0 34 34"><path d="M17 0A17 17 0 1 0 17 34H34V17A17 17 0 0 0 17 0Z" fill="#000"/><path d="M7 17L19 10M7 21L26 10.500M18 22L26 18" stroke="#fff" stroke-width="2"/><path d="M15 21L26 14.500" stroke="#888" stroke-width="2"/><circle cx="24.500" cy="22" r="1" fill="#fff"/></svg></button>
</main>

<footer class="timeline">
  <div class="play">
    <button class="icon-btn" aria-label="Start"><svg width="30" height="30" viewBox="0 0 30 30" fill="#666"><path d="M4 3H8V27H4ZM8 15L26 3V27Z"/></svg></button>
    <button class="icon-btn" aria-label="Step back"><svg width="30" height="30" viewBox="0 0 30 30" fill="#666"><path d="M2 15L22 3V27ZM24 11H28V21H24Z"/></svg></button>
    <button class="icon-btn" aria-label="Play"><svg width="30" height="30" viewBox="0 0 30 30" fill="#666"><path d="M4 0L28 15L4 30Z"/></svg></button>
    <button class="icon-btn" aria-label="Step forward"><svg width="30" height="30" viewBox="0 0 30 30" fill="#666"><path d="M28 15L8 3V27ZM2 11H6V21H2Z"/></svg></button>
    <button class="icon-btn" aria-label="End"><svg width="30" height="30" viewBox="0 0 30 30" fill="#666"><path d="M26 3H22V27H26ZM22 15L4 3V27Z"/></svg></button>
  </div>
  <button class="icon-btn feature" aria-label="Sketch1"><svg width="32" height="52" viewBox="0 0 32 52"><use href="#sketch" width="32" height="32"/><path d="M16 38H19V52H16Z" fill="#ccc"/></svg></button>
  <svg class="marker" width="24" height="64" viewBox="0 0 24 64"><path d="M0 0H24V8L14 18V64H10V18L0 8Z" fill="#666"/></svg>
  <button class="icon-btn settings" aria-label="Timeline settings"><svg width="30" height="30"><use href="#gear"/></svg></button>
</footer>
</body>
</html>
```
FILE: styles.css
```css
* { box-sizing: border-box; }

body {
  margin: 0;
  min-height: 100vh;
  display: flex;
  flex-direction: column;
  background: #f1f1f1;
  color: #3c3c3c;
  font: 22px/30px "Open Sans", "Noto Sans", sans-serif;
  overflow: hidden;
}

button {
  font: inherit;
  color: inherit;
  background: none;
  border: 0;
  padding: 0;
}

svg { display: block; flex: none; }
.sprite { position: absolute; width: 0; height: 0; }
.icon-btn { display: flex; align-items: center; justify-content: center; }
.c12 { width: 12px; height: 9px; color: #333; }
.c15 { width: 15px; height: 10px; color: #666; }
.faint .c15 { color: #929292; }

/* application bar */
.appbar { display: flex; height: 64px; background: #ccc; }
.quick {
  display: flex;
  align-items: center;
  gap: 38px;
  width: 392px;
  padding-left: 18px;
}
.quick .drop { gap: 12px; }
.quick .faint { margin-left: -14px; }
.tabs { display: flex; align-items: flex-end; gap: 8px; flex: 1; }
.tab {
  display: flex;
  align-items: center;
  flex: 0 1 392px;
  height: 56px;
  padding: 0 12px 0 8px;
  border-radius: 8px 8px 0 0;
  background: #bbb;
  color: #666;
  font-size: 24px;
}
.tab.home { flex: 0 0 78px; padding: 6px 0 0; justify-content: center; }
.tab.small { flex: 0 0 56px; padding: 0; justify-content: center; }
.tab.active { background: #f1f1f1; color: #3c3c3c; }
.title {
  flex: 1;
  display: flex;
  align-items: center;
  justify-content: center;
  gap: 12px;
  padding-top: 4px;
  color: inherit;
  text-decoration: none;
}
.x { color: #808080; }
.account { display: flex; align-items: center; gap: 34px; padding-right: 20px; }
.help {
  width: 32px;
  height: 32px;
  border-radius: 50%;
  background: #666;
  color: #ccc;
  font-size: 28px;
  font-weight: 700;
}
.avatar {
  width: 50px;
  height: 50px;
  margin-left: 4px;
  border-radius: 50%;
  background: #f1f1f1;
  font-size: 24px;
}

/* ribbon */
.ribbon {
  display: flex;
  height: 164px;
  margin-bottom: 6px;
  border-bottom: 1px solid #ccc;
}
.workspace {
  display: flex;
  align-items: center;
  justify-content: center;
  gap: 14px;
  width: 220px;
  height: 122px;
  margin: 21px 7px 0 23px;
  padding-bottom: 4px;
  border: 2px solid #ccc;
  border-radius: 8px;
  font-weight: 600;
}
.ribbon-main { flex: 1; min-width: 0; }
.rtabs { display: flex; gap: 41px; padding-left: 27px; height: 53px; }
.rtabs button {
  height: 47px;
  padding: 0 26px 0 25px;
  border-bottom: 6px solid transparent;
}
.rtabs .on { color: #0696d7; border-color: #0696d7; }
.groups { display: flex; height: 102px; }
.group {
  display: flex;
  flex-direction: column;
  align-items: center;
  border-right: 2px solid #ccc;
}
.tools { display: flex; align-items: center; gap: 22px; height: 66px; padding: 2px 0 0 2px; }
.tools button { width: 64px; height: 64px; }
.tools .picked { width: 76px; height: 76px; background: #0696d7; }
.select .tools { padding: 0; }
.tools svg { width: 100%; height: 100%; overflow: visible; }
.label {
  display: flex;
  align-items: center;
  flex: none;
  gap: 6px;
  height: 48px;
  padding-right: 2px;
}
.create { width: 453px; }
.create .label { padding-right: 8px; }
.automate { width: 198px; }
.modify { width: 366px; }
.assemble { width: 280px; }
.configure { width: 206px; }
.construct { width: 208px; }
.inspect { width: 158px; }
.insert { width: 280px; }
.select { flex: 1; padding-right: 10px; border: 0; }

/* drawing canvas */
.canvas { position: relative; flex: 1; background: #fff; overflow: hidden; }
.scene { position: absolute; inset: 0; width: 100%; height: 100%; }
.browser { position: absolute; left: 8px; top: 8px; width: 599px; }
.comments { position: absolute; left: 8px; bottom: 8px; width: 599px; }
.panel {
  display: flex;
  align-items: center;
  height: 49px;
  margin: 0;
  padding: 0 21px 0 9px;
  background: #f1f1f1;
  border: 1px solid #ccc;
  border-width: 1px 2px 2px 1px;
  color: #666;
  font: inherit;
}
.panel span { flex: 1; padding: 0 0 2px 20px; }
.comments .panel span { padding-left: 40px; }

.tree {
  list-style: none;
  margin: 11px 0 0;
  padding: 0;
  display: flex;
  flex-direction: column;
  gap: 8px;
  font-family: "Noto Sans", "Open Sans", sans-serif;
}
.tree li { display: flex; height: 40px; padding-left: 30px; }
.tree .d1 { padding-left: 66px; }
.tree .d2 { padding-left: 144px; }
.tree .twist { flex: none; width: 28px; margin-right: 14px; }
.node {
  display: flex;
  align-items: center;
  gap: 18px;
  padding: 0 24px 0 6px;
  background: #f1f1f1;
}
.node span { padding: 0 0 2px 10px; }
.node .wide { padding: 0 2px 2px 8px; }
.root { gap: 12px; padding: 0 15px 0 6px; }
.node .chip {
  display: flex;
  align-items: center;
  gap: 31px;
  height: 32px;
  padding: 0 19px 0 9px;
  background: #999;
  color: #fff;
  font-weight: 700;
}
input[type="radio"] {
  appearance: none;
  width: 26px;
  height: 26px;
  margin: 0 0 0 -2px;
  border: 2px solid #555;
  border-radius: 50%;
  background: radial-gradient(circle, #222 5px, #fff0 6px), linear-gradient(#9aa3b8, #fff);
}

.viewcube { position: absolute; right: 40px; top: 40px; width: 140px; height: 140px; }
.face {
  position: absolute;
  left: 18px;
  top: 27px;
  width: 95px;
  height: 95px;
  display: flex;
  align-items: center;
  justify-content: center;
  background: #f0f0f0ee;
  border: 1px solid #777;
  border-radius: 2px;
  box-shadow: 0 4px 28px #0002;
}
.face span {
  width: 59px;
  background: #e6e8ec;
  color: #9da2aa;
  font: 700 24px/59px Roboto, sans-serif;
}
.ax { position: absolute; font: 500 26px/30px Roboto, sans-serif; }
.y { left: 19px; top: -2px; color: #80ff80; }
.x-axis { right: 4px; top: 98px; color: #ff8080; }
.z { left: 5px; top: 112px; color: #7070ff; }
.y::after, .x-axis::before { content: ""; position: absolute; background: currentColor; }
.y::after { left: 7px; top: 26px; width: 2px; height: 4px; }
.x-axis::before { right: 18px; top: 15px; width: 6px; height: 2px; }

.navbar {
  position: absolute;
  left: 50%;
  bottom: 12px;
  width: 474px;
  height: 48px;
  margin-left: -236px;
  padding: 0 8px;
  display: flex;
  align-items: center;
  gap: 13px;
  background: #f1f1f1;
}
.navbar .icon-btn:not(.pair) + .icon-btn { margin-left: 7px; }
.pair { gap: 10px; }
.pair.tight { gap: 4px; }
.assist { position: absolute; right: 25px; bottom: 11px; }

/* timeline */
.timeline {
  display: flex;
  height: 100px;
  border-top: 4px solid #ccc;
  background: linear-gradient(90deg, #ccc 270px, #ddd 270px calc(100% - 90px), #ccc calc(100% - 90px)) top / 100% 2px no-repeat #f1f1f1;
}
.play { display: flex; align-items: center; gap: 20px; padding: 4px 0 0 18px; }
.feature { align-items: flex-start; margin: 32px 0 0 44px; }
.marker { margin-top: 20px; margin-left: -4px; }
.settings { margin: 2px 28px 0 auto; }
```
